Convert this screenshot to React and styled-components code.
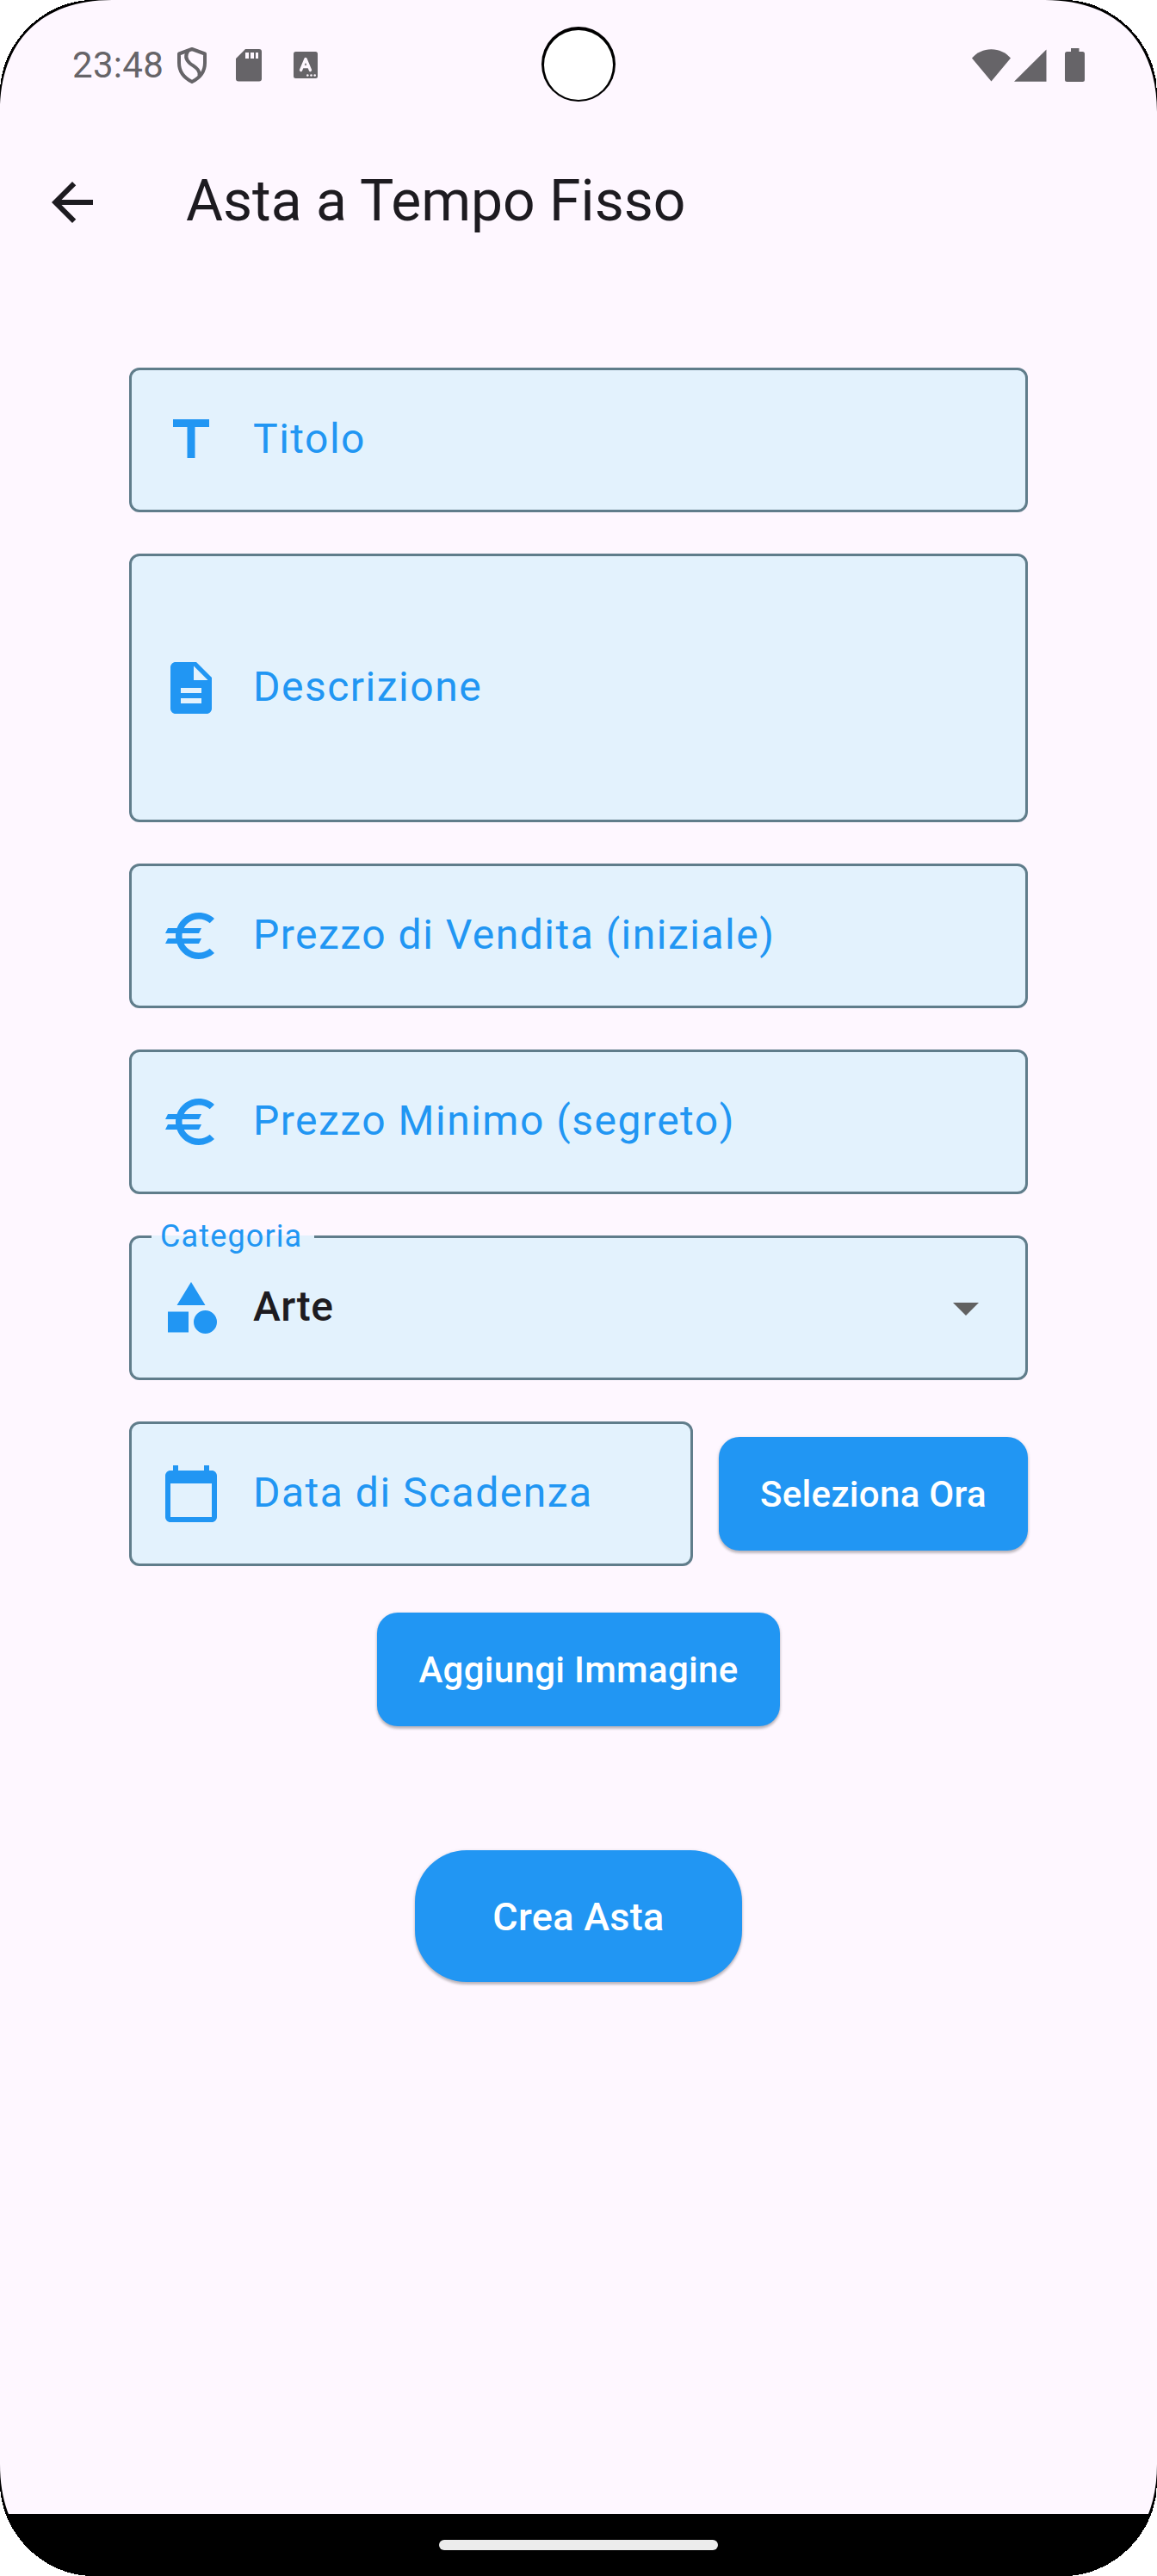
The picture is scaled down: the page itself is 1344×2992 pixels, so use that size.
import React from "react";
import styled, { createGlobalStyle, css } from "styled-components";

const color = {
  surface: "#fef7ff",
  fill: "#e3f2fd",
  outline: "#607d8b",
  primary: "#2196f3",
  text: "#1d1b20",
  status: "#666468",
};

const GlobalStyle = createGlobalStyle`
  *, *::before, *::after { box-sizing: border-box; }
  body { margin: 0; background: #fff; font-family: Roboto, "Liberation Sans", sans-serif; }
`;

const Screen = styled.div`
  position: relative;
  display: flex;
  flex-direction: column;
  width: 1344px;
  height: 2992px;
  overflow: hidden;
  background: ${color.surface};
  color: ${color.text};
`;

const StatusBar = styled.header`
  display: flex;
  align-items: center;
  justify-content: space-between;
  height: 151px;
  padding: 0 84px 0 84px;
  color: ${color.status};
`;

const StatusGroup = styled.div`
  display: flex;
  align-items: center;
`;

const Clock = styled.span`
  width: 122px;
  font-size: 42px;
  line-height: 48px;
  letter-spacing: 0.3px;
  white-space: nowrap;
`;

const StatusIcon = styled.svg`
  display: block;
  flex: none;
  margin-left: ${({ $gap }) => $gap || 0}px;
`;

const Camera = styled.div`
  position: absolute;
  left: 629px;
  top: 31px;
  width: 86px;
  height: 87px;
  padding: 4px 3px 2px;
  border-radius: 50%;
  background: #000;
`;

const CameraLens = styled.div`
  height: 100%;
  border-radius: 50%;
  background: #fff;
`;

const AppBar = styled.div`
  display: flex;
  align-items: center;
  gap: 96px;
  height: 168px;
  padding: 0 48px;
`;

const Title = styled.h1`
  margin: -3px 0 0;
  font-size: 66px;
  font-weight: 400;
  line-height: 84px;
  white-space: nowrap;
`;

const BareButton = styled.button`
  display: flex;
  padding: 0;
  border: 0;
  background: none;
  color: inherit;
`;

const Form = styled.main`
  display: flex;
  flex: 1;
  flex-direction: column;
  gap: 48px;
  padding: 108px 150px 0;
`;

const Field = styled.div`
  position: relative;
  display: flex;
  flex: ${({ $grow }) => ($grow ? "1" : "none")};
  align-items: center;
  gap: 36px;
  height: ${({ $tall }) => ($tall ? 312 : 168)}px;
  padding: 0 33px;
  border: 3px solid ${color.outline};
  border-radius: 12px;
  background: ${color.fill};
  color: ${color.primary};
`;

const fieldText = css`
  flex: 1;
  font-size: 48px;
  line-height: 72px;
  white-space: nowrap;
  margin-top: -3px;
`;

const Placeholder = styled.span`
  ${fieldText}
  letter-spacing: 1.5px;
`;

const Value = styled.span`
  ${fieldText}
  color: ${color.text};
  font-weight: 500;
  letter-spacing: 0.45px;
`;

const FloatingLabel = styled.span`
  position: absolute;
  left: 23px;
  top: -23px;
  width: 189px;
  padding-left: 10px;
  background: linear-gradient(${color.fill}, ${color.fill}) 0 20px / 100% 3px no-repeat;
  font-size: 36px;
  line-height: 42px;
  letter-spacing: 1.125px;
  white-space: nowrap;
`;

const Row = styled.div`
  display: flex;
  align-items: center;
  gap: 30px;
`;

const Actions = styled.div`
  display: flex;
  flex-direction: column;
  align-items: center;
  gap: 144px;
  padding-top: 6px;
`;

const Button = styled.button`
  display: flex;
  flex: none;
  align-items: center;
  justify-content: center;
  width: ${({ $width }) => $width}px;
  height: ${({ $large }) => ($large ? 153 : 132)}px;
  padding: 2px 0 0;
  border: 0;
  border-radius: ${({ $large }) => ($large ? 60 : 24)}px;
  background: ${color.primary};
  box-shadow: 0 3px 3px rgba(0, 0, 0, 0.2), 0 1px 4px rgba(0, 0, 0, 0.14);
  color: #fff;
  font-family: inherit;
  font-size: ${({ $large }) => ($large ? 45 : 42)}px;
  font-weight: 500;
  line-height: 60px;
  letter-spacing: 0.3px;
  white-space: nowrap;
`;

const NavBar = styled.footer`
  display: flex;
  align-items: center;
  justify-content: center;
  height: 72px;
  background: #000;
`;

const NavHandle = styled.div`
  width: 324px;
  height: 12px;
  border-radius: 6px;
  background: #ececec;
`;

const CornerSvg = styled.svg`
  position: absolute;
  top: ${({ $bottom }) => ($bottom ? "auto" : 0)};
  bottom: ${({ $bottom }) => ($bottom ? 0 : "auto")};
  left: ${({ $right }) => ($right ? "auto" : 0)};
  right: ${({ $right }) => ($right ? 0 : "auto")};
  transform: scale(${({ $right }) => ($right ? -1 : 1)}, ${({ $bottom }) => ($bottom ? -1 : 1)});
`;

const paths = {
  back: "M20 11H7.83l5.59-5.59L12 4l-8 8 8 8 1.41-1.41L7.83 13H20v-2z",
  title: "M5 4v3h5.5v12h3V7H19V4z",
  description:
    "M14 2H6c-1.1 0-1.99.9-1.99 2L4 20c0 1.1.89 2 1.99 2H18c1.1 0 2-.9 2-2V8l-6-6zm2 16H8v-2h8v2zm0-4H8v-2h8v2zm-3-5V3.5L18.5 9H13z",
  euro:
    "M15 18.5c-2.51 0-4.68-1.42-5.76-3.5H15l1-2H8.58c-.05-.33-.08-.66-.08-1s.03-.67.08-1H15l1-2H9.24C10.32 6.92 12.5 5.5 15 5.5c1.61 0 3.09.59 4.23 1.57L21 5.3C19.41 3.87 17.3 3 15 3c-3.92 0-7.24 2.51-8.48 6H3l-1 2h4.06c-.04.33-.06.66-.06 1s.02.67.06 1H3l-1 2h4.52c1.24 3.49 4.56 6 8.48 6 2.31 0 4.41-.87 6-2.3l-1.78-1.77c-1.13.98-2.6 1.57-4.22 1.57z",
  category:
    "M12 2l-5.5 9h11zM17.5 13a4.5 4.5 0 1 0 0 9 4.5 4.5 0 0 0 0-9zM3 13.5h8v8H3z",
  calendar:
    "M20 3h-1V1h-2v2H7V1H5v2H4c-1.1 0-2 .9-2 2v16c0 1.1.9 2 2 2h16c1.1 0 2-.9 2-2V5c0-1.1-.9-2-2-2zm0 18H4V8h16v13z",
  dropdown: "M7 10l5 5 5-5z",
};

const IconSvg = styled.svg`
  display: block;
  flex: none;
  width: 72px;
  height: 72px;
  fill: ${({ $fill }) => $fill || "currentColor"};
`;

const Icon = ({ name, fill }) => (
  <IconSvg viewBox="0 0 24 24" $fill={fill} aria-hidden="true">
    <path d={paths[name]} />
  </IconSvg>
);

const TextField = ({ icon, label, tall, grow }) => (
  <Field $tall={tall} $grow={grow}>
    <Icon name={icon} />
    <Placeholder>{label}</Placeholder>
  </Field>
);

const Corner = ({ bottom, right }) => (
  <CornerSvg width="132" height="132" $bottom={bottom} $right={right} aria-hidden="true">
    <path d="M0 0H130C48 0 0 48 0 130Z" fill="#000" />
    <path d="M0 0H108C50 0 0 50 0 108Z" fill="#fff" shapeRendering="crispEdges" />
  </CornerSvg>
);

export default function App() {
  return (
    <>
      <GlobalStyle />
      <Screen>
        <StatusBar>
          <StatusGroup>
            <Clock>23:48</Clock>
            <StatusIcon width="34" height="42" viewBox="0 0 34 42" fill="none" stroke="currentColor" strokeWidth="4" strokeLinejoin="round">
              <path d="M17 2 32 7.5V18c0 10-6 17.500-15 22C8 35.500 2 28 2 18V7.500Z" />
              <path d="M12.500 4C9 9 9.500 14 14.500 18.500C20 23 26.500 25 25.500 33" />
            </StatusIcon>
            <StatusIcon $gap={34} width="30" height="38" viewBox="0 0 30 38" fill="currentColor">
              <path fillRule="evenodd" d="M11 0H27a3 3 0 0 1 3 3V34.500a3 3 0 0 1-3 3H3a3 3 0 0 1-3-3V11ZM11 4v7h4V4ZM17 4v7h4V4ZM23 4v7h3V4Z" />
            </StatusIcon>
            <StatusIcon $gap={37} width="28" height="31" viewBox="0 0 28 31">
              <rect width="28" height="31" rx="2.500" fill="currentColor" />
              <path d="M8.500 21.500 14 8.500 19.500 21.500M10.500 17.500H17.500" fill="none" stroke={color.surface} strokeWidth="3.300" strokeLinecap="round" strokeLinejoin="round" />
              <circle cx="16.300" cy="27.500" r="1.300" fill={color.surface} />
              <circle cx="20.500" cy="27.500" r="1.300" fill={color.surface} />
              <circle cx="24.700" cy="27.500" r="1.300" fill={color.surface} />
            </StatusIcon>
          </StatusGroup>
          <StatusGroup>
            <StatusIcon width="45" height="38" viewBox="0 0 45 38" fill="currentColor">
              <path d="M22.500 37.500 0 10.500C6 4 13.500 .3 22.500 .3S39 4 45 10.500Z" />
            </StatusIcon>
            <StatusIcon $gap={4} width="38" height="38" viewBox="0 0 38 38" fill="currentColor">
              <path d="M37.500 .5V37.700H0Z" />
            </StatusIcon>
            <StatusIcon $gap={21} width="23" height="39" viewBox="0 0 23 39" fill="currentColor">
              <path d="M7 0h9.500v4H20.500a2.500 2.500 0 0 1 2.500 2.500V36.500a2.500 2.500 0 0 1-2.500 2.500H2.500A2.500 2.500 0 0 1 0 36.500V6.500A2.500 2.500 0 0 1 2.500 4H7Z" />
            </StatusIcon>
          </StatusGroup>
        </StatusBar>
        <AppBar>
          <BareButton aria-label="Indietro">
            <Icon name="back" />
          </BareButton>
          <Title>Asta a Tempo Fisso</Title>
        </AppBar>
        <Form>
          <TextField icon="title" label="Titolo" />
          <TextField icon="description" label="Descrizione" tall />
          <TextField icon="euro" label="Prezzo di Vendita (iniziale)" />
          <TextField icon="euro" label="Prezzo Minimo (segreto)" />
          <Field>
            <FloatingLabel>Categoria</FloatingLabel>
            <Icon name="category" />
            <Value>Arte</Value>
            <Icon name="dropdown" fill="#616161" />
          </Field>
          <Row>
            <TextField icon="calendar" label="Data di Scadenza" grow />
            <Button $width={359}>Seleziona Ora</Button>
          </Row>
          <Actions>
            <Button $width={468}>Aggiungi Immagine</Button>
            <Button $width={380} $large>Crea Asta</Button>
          </Actions>
        </Form>
        <NavBar>
          <NavHandle />
        </NavBar>
        <Camera>
          <CameraLens />
        </Camera>
        <Corner />
        <Corner right />
        <Corner bottom />
        <Corner bottom right />
      </Screen>
    </>
  );
}
